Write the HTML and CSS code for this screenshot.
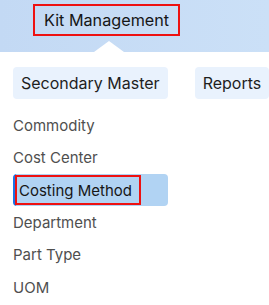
FILE: index.html
```html
<!DOCTYPE html>
<html>
<head>
<meta charset="utf-8">
<link rel="stylesheet" href="styles.css">
</head>
<body>
<header class="topbar">
  <span class="module annotated">Kit Management</span>
  <span class="notch"></span>
</header>
<nav class="tabs">
  <span class="tab">Secondary Master</span>
  <span class="tab">Reports</span>
</nav>
<ul class="list">
  <li class="item">Commodity</li>
  <li class="item">Cost Center</li>
  <li class="item active"><span class="annotated">Costing Method</span></li>
  <li class="item">Department</li>
  <li class="item">Part Type</li>
  <li class="item">UOM</li>
</ul>
</body>
</html>
```
FILE: styles.css
```css
html, body {
  margin: 0;
  padding: 0;
  background: #ffffff;
  font-family: Inter, "Noto Sans", sans-serif;
  overflow: hidden;
}
.topbar {
  position: relative;
  height: 52px;
  box-sizing: border-box;
  padding: 4px 0 0 33px;
  background: linear-gradient(90deg, #c3d9f4, #cbe0f7);
}
.annotated {
  outline: 2px solid #ee1111;
  outline-offset: -2px;
}
.module {
  display: inline-flex;
  align-items: center;
  height: 32px;
  width: 147px;
  box-sizing: border-box;
  padding-left: 11px;
  font-size: 16.2px;
  color: #161616;
}
.notch {
  position: absolute;
  left: 94px;
  bottom: 0;
  width: 0;
  height: 0;
  border-left: 15px solid transparent;
  border-right: 15px solid transparent;
  border-bottom: 11px solid #ffffff;
}
.tabs {
  display: flex;
  gap: 27px;
  margin-top: 15px;
  padding-left: 13px;
  white-space: nowrap;
}
.tab {
  display: inline-flex;
  align-items: center;
  height: 32px;
  padding: 0 8px;
  border-radius: 4px;
  background: #e9f2fd;
  font-size: 16px;
  color: #1e1e1e;
}
.list {
  list-style: none;
  margin: 10px 0 0 0;
  padding: 0 0 0 13px;
}
.item {
  height: 32.5px;
  display: flex;
  align-items: center;
  font-size: 15px;
  color: #4f4f4f;
}
.item.active {
  width: 155px;
  height: 32px;
  box-sizing: border-box;
  background: #b1d3f3;
  border-left: 2px solid #1a73e8;
  border-radius: 4px;
  color: #161616;
}
.item.active .annotated {
  display: flex;
  align-items: center;
  height: 30px;
  width: 126px;
  box-sizing: border-box;
  padding-left: 4px;
}
```
